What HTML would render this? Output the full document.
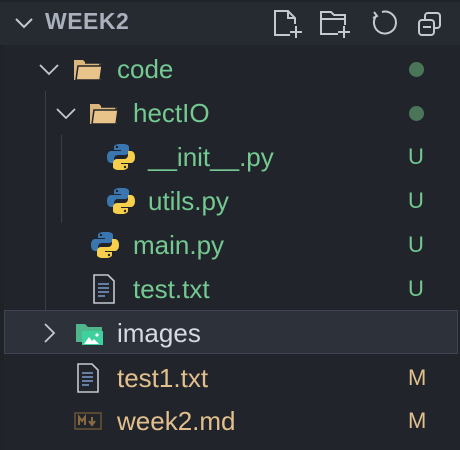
<!DOCTYPE html>
<html><head><style>
body{margin:0;width:460px;height:450px;background:#21252b;font-family:"Liberation Sans",sans-serif;overflow:hidden;position:relative}
.hdr{position:absolute;left:0;top:0;width:460px;height:45px;background:#262a31;border-top:2px solid #1f2227;box-sizing:border-box}
.strip{position:absolute;left:0;top:45px;width:4px;height:405px;background:#1f2227}
.t{position:absolute;font-size:26px;line-height:44px;height:44px;white-space:nowrap}
.g{color:#73c991}.m{color:#e2c08d}.w{color:#d7dae0}
.badge{position:absolute;left:408px;font-size:22px;line-height:44px}
.dot{position:absolute;left:409px;width:15px;height:15px;border-radius:50%;background:#4b7558}
.guide{position:absolute;width:1px;background:#3a3f47}
svg{position:absolute}
</style></head><body>
<div class="hdr"></div>
<div class="strip"></div>
<svg style="left:14px;top:13px" width="20" height="20" viewBox="0 0 20 20"><path d="M2 6l8 8 8-8" fill="none" stroke="#c5c8ce" stroke-width="2"/></svg>
<div style="position:absolute;left:45px;top:8px;font-size:23px;font-weight:bold;color:#aab0bc;letter-spacing:0.5px">WEEK2</div>
<svg style="left:270px;top:8px" width="36" height="32" viewBox="0 0 36 32" fill="none" stroke="#c5c8ce" stroke-width="2"><path d="M20 27H5V3h13l7 7v6M18 3v7h7M26 18v12M20 24h12"/></svg>
<svg style="left:318px;top:8px" width="36" height="32" viewBox="0 0 36 32" fill="none" stroke="#c5c8ce" stroke-width="2"><path d="M20 26H3V4h10l3 3h11v10M3 11h24M26 18v12M20 24h12"/></svg>
<svg style="left:368px;top:8px" width="30" height="30" viewBox="0 0 30 30" fill="none" stroke="#c5c8ce" stroke-width="2"><path d="M9 7A11 11 0 1 0 14 4M6 4l3 4-4 2"/></svg>
<svg style="left:415px;top:10px" width="30" height="28" viewBox="0 0 30 28" fill="none" stroke="#c5c8ce" stroke-width="2"><rect x="10" y="3" width="15" height="15" rx="3"/><rect x="4" y="10" width="15" height="15" rx="3" fill="#262a31"/><path d="M8 17h8"/></svg>
<div class="guide" style="left:45px;top:91px;height:220px"></div>
<div class="guide" style="left:61px;top:135px;height:88px"></div>
<div style="position:absolute;left:4px;top:310px;width:454px;height:44px;background:#2c313a;border:1px solid #3e4452;box-sizing:border-box"></div>
<svg style="left:38px;top:59px" width="22" height="20" viewBox="0 0 22 20"><path d="M2 6l9 9 9-9" fill="none" stroke="#c5c8ce" stroke-width="1.8"/></svg>
<svg style="left:55px;top:103px" width="22" height="20" viewBox="0 0 22 20"><path d="M2 6l9 9 9-9" fill="none" stroke="#c5c8ce" stroke-width="1.8"/></svg>
<svg style="left:42px;top:322px" width="14" height="22" viewBox="0 0 14 22"><path d="M3 2l9 9-9 9" fill="none" stroke="#c5c8ce" stroke-width="1.8"/></svg>
<svg style="left:73px;top:57px" width="30" height="24" viewBox="0 0 30 24"><path d="M1 3h9l3 3h15v17H1z" fill="#dcb67a"/><path d="M5 9h24l-2 14H3z" fill="#e8c38a" stroke="#21252b" stroke-width="1.5"/><path d="M12 6h15v3" fill="none" stroke="#21252b" stroke-width="1.5"/></svg>
<svg style="left:89px;top:101px" width="30" height="24" viewBox="0 0 30 24"><path d="M1 3h9l3 3h15v17H1z" fill="#dcb67a"/><path d="M5 9h24l-2 14H3z" fill="#e8c38a" stroke="#21252b" stroke-width="1.5"/><path d="M12 6h15v3" fill="none" stroke="#21252b" stroke-width="1.5"/></svg>
<svg style="left:76px;top:320px" width="28" height="26" viewBox="0 0 28 26"><path d="M0 4h9l3 3h14v15H0z" fill="#4fb58a"/><rect x="6" y="11" width="21" height="14" fill="#3fd0a0"/><path d="M8 24l5-7 3 4 2-2 5 5z" fill="#fff"/><circle cx="21" cy="15" r="1.6" fill="#fff"/></svg>
<svg style="left:107px;top:143px" width="28" height="28" viewBox="0 0 28 28"><path d="M13 1c-6 0-6 3-6 3v3h7v1H4s-4 0-4 6 4 6 4 6h3v-4s0-4 4-4h7s4 0 4-4V4s0-3-6-3z" fill="#3a76b0"/><path d="M15 27c6 0 6-3 6-3v-3h-7v-1h10s4 0 4-6-4-6-4-6h-3v4s0 4-4 4h-7s-4 0-4 4v4s0 3 6 3z" fill="#f7d04b"/><circle cx="10" cy="4" r="1.2" fill="#21252b"/><circle cx="18" cy="24" r="1.2" fill="#21252b"/></svg>
<svg style="left:107px;top:187px" width="28" height="28" viewBox="0 0 28 28"><path d="M13 1c-6 0-6 3-6 3v3h7v1H4s-4 0-4 6 4 6 4 6h3v-4s0-4 4-4h7s4 0 4-4V4s0-3-6-3z" fill="#3a76b0"/><path d="M15 27c6 0 6-3 6-3v-3h-7v-1h10s4 0 4-6-4-6-4-6h-3v4s0 4-4 4h-7s-4 0-4 4v4s0 3 6 3z" fill="#f7d04b"/><circle cx="10" cy="4" r="1.2" fill="#21252b"/><circle cx="18" cy="24" r="1.2" fill="#21252b"/></svg>
<svg style="left:91px;top:231px" width="28" height="28" viewBox="0 0 28 28"><path d="M13 1c-6 0-6 3-6 3v3h7v1H4s-4 0-4 6 4 6 4 6h3v-4s0-4 4-4h7s4 0 4-4V4s0-3-6-3z" fill="#3a76b0"/><path d="M15 27c6 0 6-3 6-3v-3h-7v-1h10s4 0 4-6-4-6-4-6h-3v4s0 4-4 4h-7s-4 0-4 4v4s0 3 6 3z" fill="#f7d04b"/><circle cx="10" cy="4" r="1.2" fill="#21252b"/><circle cx="18" cy="24" r="1.2" fill="#21252b"/></svg>
<svg style="left:92px;top:274px" width="24" height="30" viewBox="0 0 24 30"><path d="M2 1h14l6 6v22H2z" fill="#21252b" stroke="#c5c8ce" stroke-width="1.6"/><path d="M6 10h11M6 14h11M6 18h11M6 22h7" stroke="#7c9ccc" stroke-width="1.6"/></svg>
<svg style="left:76px;top:363px" width="24" height="30" viewBox="0 0 24 30"><path d="M2 1h14l6 6v22H2z" fill="#21252b" stroke="#c5c8ce" stroke-width="1.6"/><path d="M6 10h11M6 14h11M6 18h11M6 22h7" stroke="#7c9ccc" stroke-width="1.6"/></svg>
<svg style="left:74px;top:412px" width="28" height="18" viewBox="0 0 28 18"><rect x="1" y="1" width="26" height="16" fill="none" stroke="#6b5436" stroke-width="1.5"/><path d="M5 13V5l3 4 3-4v8M18 5v7M15 9l3 4 3-4" fill="none" stroke="#8a6a40" stroke-width="2"/></svg>
<div class="t g" style="left:117px;top:47px">code</div>
<div class="t g" style="left:133px;top:91px">hectIO</div>
<div class="t g" style="left:148px;top:135px">__init__.py</div>
<div class="t g" style="left:148px;top:179px">utils.py</div>
<div class="t g" style="left:133px;top:223px">main.py</div>
<div class="t g" style="left:133px;top:267px">test.txt</div>
<div class="t w" style="left:117px;top:311px">images</div>
<div class="t m" style="left:117px;top:356px">test1.txt</div>
<div class="t m" style="left:117px;top:399px">week2.md</div>
<div class="dot" style="top:62px"></div>
<div class="dot" style="top:106px"></div>
<div class="badge g" style="top:135px">U</div>
<div class="badge g" style="top:179px">U</div>
<div class="badge g" style="top:223px">U</div>
<div class="badge g" style="top:267px">U</div>
<div class="badge m" style="top:356px">M</div>
<div class="badge m" style="top:399px">M</div>
</body></html>
